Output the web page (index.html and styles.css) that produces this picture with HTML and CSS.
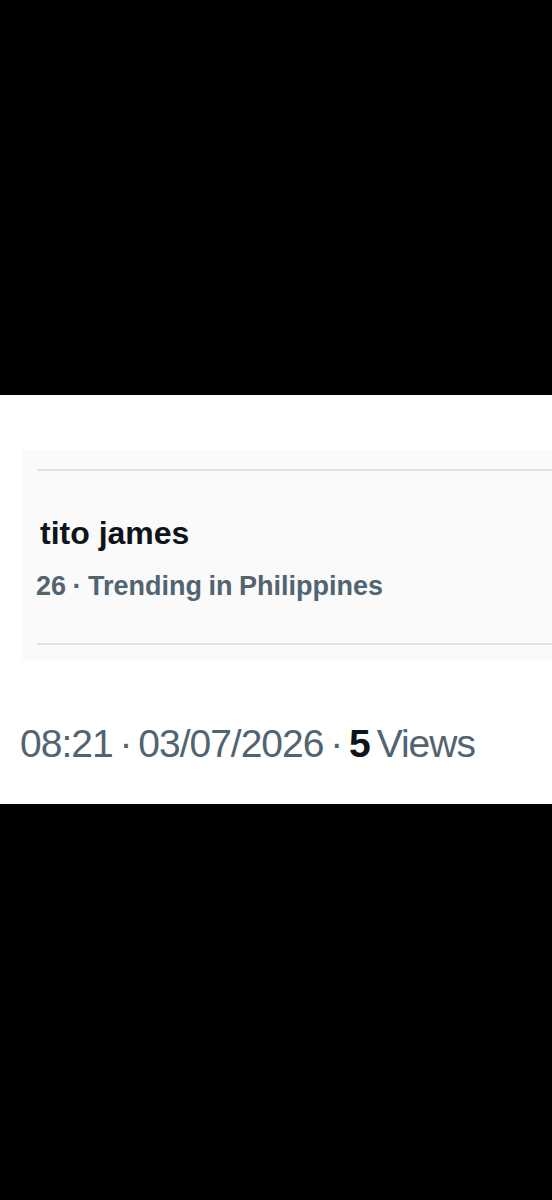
FILE: index.html
```
<!DOCTYPE html>
<html lang="en">
<head>
<meta charset="utf-8">
<title>Post</title>
<link rel="stylesheet" href="styles.css">
</head>
<body>
<div class="screen">
  <div class="black-top"></div>
  <main class="panel">
    <section class="card">
      <div class="divider"></div>
      <div class="trend">
        <div class="trend-name">tito james</div>
        <div class="trend-meta">26 · Trending in Philippines</div>
      </div>
      <div class="divider"></div>
    </section>
    <div class="stamp">08:21 · 03/07/2026 · <b class="views">5</b> Views</div>
  </main>
  <div class="black-bottom"></div>
</div>
</body>
</html>
```
FILE: styles.css
```
html, body {
  margin: 0;
  padding: 0;
  background: #000;
}
.screen {
  width: 552px;
  height: 1200px;
  display: flex;
  flex-direction: column;
  background: #000;
}
.black-top {
  height: 395px;
  flex: none;
}
.panel {
  height: 409px;
  flex: none;
  background: #fff;
  display: flex;
  flex-direction: column;
}
.card {
  margin-top: 55px;
  margin-left: 22px;
  height: 210px;
  background: #fafafa;
  padding-top: 19px;
  padding-left: 15px;
  display: flex;
  flex-direction: column;
  box-sizing: border-box;
}
.divider {
  height: 2px;
  background: #e3e3e3;
}
.trend {
  padding-left: 3px;
  height: 172px;
  box-sizing: border-box;
  padding-top: 44px;
  font-family: "Liberation Sans", Arial, sans-serif;
}
.trend-name {
  font-size: 32px;
  font-weight: 700;
  color: #0f1419;
  line-height: 36px;
}
.trend-meta {
  margin-top: 19px;
  font-size: 27px;
  font-weight: 700;
  color: #536471;
  line-height: 32px;
  margin-left: -4px;
  word-spacing: -1px;
}
.stamp {
  margin-top: 62px;
  margin-left: 20px;
  font-family: "Liberation Sans", Arial, sans-serif;
  font-size: 39px;
  line-height: 44px;
  letter-spacing: -1px;
  word-spacing: -3px;
  color: #536471;
  white-space: nowrap;
}
.views {
  color: #0f1419;
  font-weight: 700;
}
.black-bottom {
  flex: 1;
}
```
